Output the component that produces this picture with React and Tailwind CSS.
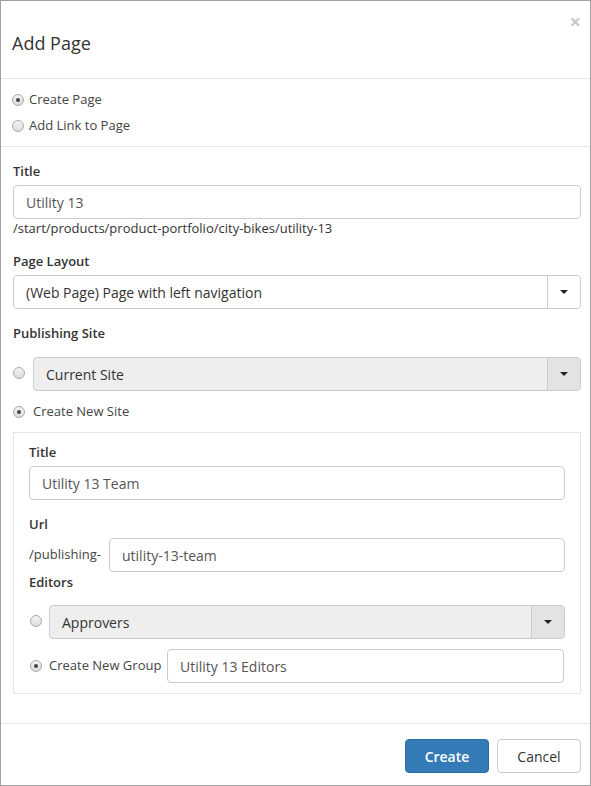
import React from "react";

function Radio({ checked }) {
  return (
    <span className="relative inline-block w-[12px] h-[12px] shrink-0 rounded-full border border-[#a8a8a8] bg-gradient-to-b from-[#f4f4f4] to-[#dcdcdc]">
      {checked && (
        <span className="absolute left-[3px] top-[3px] w-[4px] h-[4px] rounded-full bg-[#444]" />
      )}
    </span>
  );
}

function Caret() {
  return (
    <span className="inline-block w-0 h-0 border-l-[4px] border-r-[4px] border-t-[4px] border-l-transparent border-r-transparent border-t-[#222]" />
  );
}

function Input({ value, className = "" }) {
  return (
    <div
      className={
        "h-[34px] flex items-center px-3 border border-[#ccc] rounded-[4px] bg-white text-[14px] text-[#555] " +
        className
      }
    >
      {value}
    </div>
  );
}

function Select({ value, gray, className = "" }) {
  return (
    <div
      className={
        "h-[34px] flex border border-[#ccc] rounded-[4px] text-[14px] text-[#333] " +
        (gray ? "bg-[#eeeeee] " : "bg-white ") +
        className
      }
    >
      <div className="flex-1 flex items-center px-3">{value}</div>
      <div
        className={
          "w-[33px] flex items-center justify-center border-l border-[#ccc] rounded-r-[4px] " +
          (gray ? "bg-[#e3e3e3]" : "bg-white")
        }
      >
        <Caret />
      </div>
    </div>
  );
}

function Label({ children, className = "" }) {
  return (
    <div className={"text-[13px] leading-[18px] font-semibold text-[#333] " + className}>
      {children}
    </div>
  );
}

export default function App() {
  return (
    <div
      className="w-[591px] h-[786px] border border-[#a0a0a0] bg-white flex flex-col text-[#333]"
      style={{ fontFamily: '"Open Sans", "Noto Sans", sans-serif' }}
    >
      {/* header */}
      <div className="relative h-[78px] shrink-0 border-b border-[#e5e5e5] flex items-center pl-[11px] pt-[6px]">
        <div className="text-[18px] text-[#333] leading-[26px]">Add Page</div>
        <div className="absolute right-[9px] top-[9px] text-[20px] leading-[24px] font-bold text-[#c8c8c8]">
          ×
        </div>
      </div>

      {/* type radios */}
      <div className="h-[68px] shrink-0 border-b border-[#e5e5e5] pl-[11px] pt-[12px] flex flex-col gap-[8px] text-[13px] text-[#444]">
        <div className="flex items-center gap-[5px] h-[18px]">
          <Radio checked />
          <span>Create Page</span>
        </div>
        <div className="flex items-center gap-[5px] h-[18px]">
          <Radio />
          <span>Add Link to Page</span>
        </div>
      </div>

      {/* body */}
      <div className="flex-1 pl-[12px] pr-[9px] pt-[15px]">
        <Label>Title</Label>
        <Input value="Utility 13" className="mt-[5px]" />
        <div className="text-[13px] leading-[18px] text-[#333]">
          /start/products/product-portfolio/city-bikes/utility-13
        </div>

        <Label className="mt-[15px]">Page Layout</Label>
        <Select value="(Web Page) Page with left navigation" className="mt-[5px]" />

        <Label className="mt-[15px]">Publishing Site</Label>
        <div className="mt-[15px] flex items-start gap-[8px]">
          <div className="pt-[4px]">
            <Radio />
          </div>
          <Select value="Current Site" gray className="flex-1" />
        </div>
        <div className="mt-[12px] flex items-center gap-[8px] h-[18px] text-[13px] text-[#444]">
          <Radio checked />
          <span>Create New Site</span>
        </div>

        {/* inner panel */}
        <div className="mt-[11px] border border-[#e5e5e5] px-[15px] pt-[10px] pb-[10px]">
          <Label>Title</Label>
          <Input value="Utility 13 Team" className="mt-[5px]" />

          <Label className="mt-[15px]">Url</Label>
          <div className="mt-[5px] flex items-center">
            <div className="w-[80px] text-[13px] text-[#444]">/publishing-</div>
            <Input value="utility-13-team" className="flex-1" />
          </div>

          <Label className="mt-[1px]">Editors</Label>
          <div className="mt-[14px] flex items-start gap-[7px]">
            <div className="pt-[4px] pl-[1px]">
              <Radio />
            </div>
            <Select value="Approvers" gray className="flex-1" />
          </div>
          <div className="mt-[10px] flex items-center">
            <div className="w-[138px] flex items-center gap-[7px] pl-[1px] text-[13px] text-[#444]">
              <Radio checked />
              <span>Create New Group</span>
            </div>
            <Input value="Utility 13 Editors" className="flex-1 mr-[1px]" />
          </div>
        </div>
      </div>

      {/* footer */}
      <div className="h-[62px] shrink-0 border-t border-[#e5e5e5] flex justify-end items-start pt-[15px] pr-[9px] gap-[8px]">
        <button className="w-[84px] h-[34px] rounded-[4px] bg-[#337ab7] border border-[#2e6da4] text-white text-[14px] font-semibold">
          Create
        </button>
        <button className="w-[84px] h-[34px] rounded-[4px] bg-white border border-[#ccc] text-[#333] text-[14px]">
          Cancel
        </button>
      </div>
    </div>
  );
}
